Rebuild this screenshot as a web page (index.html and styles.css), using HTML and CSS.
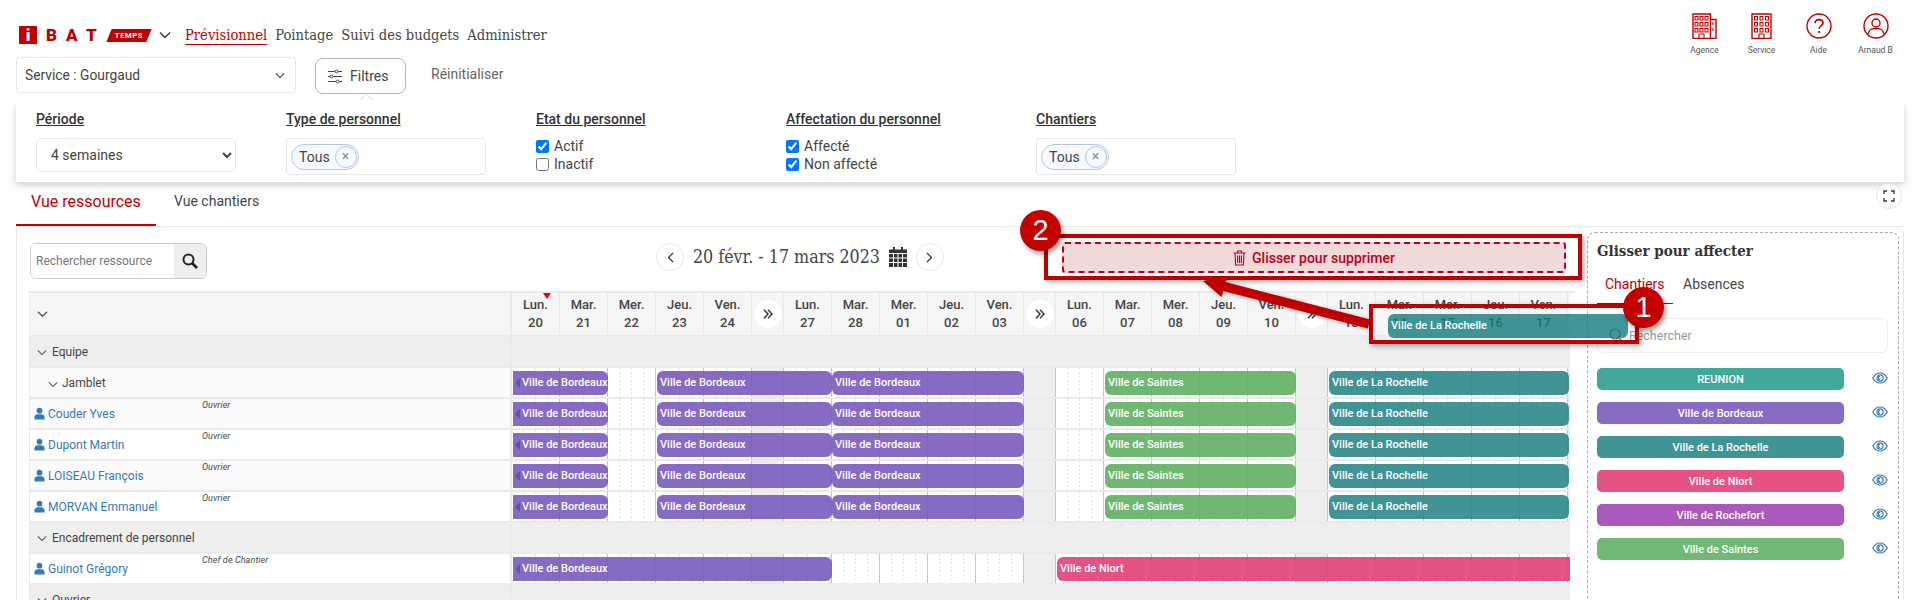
FILE: index.html
```html
<!DOCTYPE html>
<html lang="fr">
<head>
  <meta charset="UTF-8" />
  <title>iBAT Temps | Prévisionnel</title>
  <link rel="stylesheet" href="styles.css">
</head>
<body>

<svg class="icon-defs" width="0" height="0">
  <symbol id="chev" viewBox="0 0 12 8"><path d="M1 1.5 6 6.5 11 1.5" fill="none" stroke="currentColor" stroke-width="1.3"/></symbol>
  <symbol id="user" viewBox="0 0 12 13"><circle cx="6" cy="3.4" r="3.1" fill="currentColor"/><path d="M0.5 13V10.6C0.5 8.4 2.4 7.2 4 7.2H8C9.6 7.2 11.5 8.4 11.5 10.6V13Z" fill="currentColor"/></symbol>
  <symbol id="eye" viewBox="0 0 16 12"><path d="M0.8 6C2.6 2.8 5.2 1 8 1S13.4 2.8 15.2 6C13.4 9.2 10.8 11 8 11S2.6 9.2 0.8 6Z" fill="none" stroke="currentColor" stroke-width="1.2"/><circle cx="8" cy="6" r="3.1" fill="none" stroke="currentColor" stroke-width="1.2"/><path d="M8 4.4A1.6 1.6 0 0 0 8 7.6" fill="none" stroke="currentColor" stroke-width="1.2"/></symbol>
  <symbol id="dbl" viewBox="0 0 10 10"><path d="M1 0.8 5 5 1 9.2M5 0.8 9 5 5 9.2" fill="none" stroke="currentColor" stroke-width="1.4"/></symbol>
</svg>

<header class="topbar">
  <div class="brand-nav">
    <div class="logo">
      <span class="logo-i">i</span>
      <span class="logo-bat">B</span><span class="logo-bat">A</span><span class="logo-bat">T</span>
      <span class="logo-temps"><span>TEMPS</span></span>
    </div>
    <svg class="logo-chev"><use href="#chev"/></svg>
    <nav class="main-nav">
      <a class="active" href="#">Prévisionnel</a>
      <a href="#">Pointage</a>
      <a href="#">Suivi des budgets</a>
      <a href="#">Administrer</a>
    </nav>
  </div>
  <div class="top-actions">
    <div class="top-action">
      <svg width="25" height="26" viewBox="0 0 25 26" fill="none" stroke="#c00000">
        <path d="M1 25.5V1H18.5V25.5ZM18.5 6.5H24V25.5H18.5" stroke-width="1.4"/>
        <path d="M3 3.5h3v3.5h-3zM8 3.5h3v3.5h-3zM13 3.5h3v3.5h-3zM3 9.5h3v3.5h-3zM8 9.5h3v3.5h-3zM13 9.5h3v3.5h-3zM3 15.5h3v3.5h-3zM8 15.5h3v3.5h-3zM13 15.5h3v3.5h-3zM7 25v-4h5v4M21 9v3M21 15v3" stroke-width="1.1"/>
      </svg>
      <span>Agence</span>
    </div>
    <div class="top-action">
      <svg width="21" height="26" viewBox="0 0 21 26" fill="none" stroke="#c00000">
        <path d="M1 25.5V1H20V25.5Z" stroke-width="1.4"/>
        <path d="M3.5 3.5h3v3.5h-3zM9 3.5h3v3.5h-3zM14.5 3.5h3v3.5h-3zM3.5 9.5h3v3.5h-3zM9 9.5h3v3.5h-3zM14.5 9.5h3v3.5h-3zM3.5 15.5h3v3.5h-3zM9 15.5h3v3.5h-3zM14.5 15.5h3v3.5h-3zM8 25v-4h5v4" stroke-width="1.1"/>
      </svg>
      <span>Service</span>
    </div>
    <div class="top-action">
      <svg width="26" height="26" viewBox="0 0 26 26" fill="none" stroke="#c00000" stroke-width="1.4">
        <circle cx="13" cy="13" r="12"/>
        <path d="M9 10.2C9 7.8 10.8 6.6 13 6.6S17 7.9 17 10C17 12.7 13.2 12.8 13.2 16" stroke-width="1.6"/>
        <path d="M13.2 18v2" stroke-width="1.8"/>
      </svg>
      <span>Aide</span>
    </div>
    <div class="top-action">
      <svg width="26" height="26" viewBox="0 0 26 26" fill="none" stroke="#c00000" stroke-width="1.4">
        <circle cx="13" cy="13" r="12"/>
        <circle cx="13" cy="10" r="4"/>
        <path d="M5 21.5C5.6 17.6 8.4 15.8 10.5 15.8H15.5C17.6 15.8 20.4 17.6 21 21.5"/>
      </svg>
      <span>Arnaud B</span>
    </div>
  </div>
</header>

<section class="toolbar">
  <div class="service-select">
    <span>Service : Gourgaud</span>
    <svg><use href="#chev"/></svg>
  </div>
  <button class="filter-btn">
    <svg width="14" height="15" viewBox="0 0 14 15" fill="none" stroke="#444" stroke-width="1">
      <path d="M0 2.5H7M10 2.5H14M0 7.5H2M5 7.5H14M0 12.5H8M11 12.5H14"/>
      <circle cx="8.5" cy="2.5" r="1.5"/><circle cx="3.5" cy="7.5" r="1.5"/><circle cx="9.5" cy="12.5" r="1.5"/>
    </svg>
    Filtres
  </button>
  <a class="reset-link" href="#">Réinitialiser</a>
</section>

<section class="filters">
  <div class="filter-col">
    <h4>Période</h4>
    <select class="period-select"><option>4 semaines</option></select>
  </div>
  <div class="filter-col">
    <h4>Type de personnel</h4>
    <div class="tag-box"><span class="tag">Tous <i>×</i></span></div>
  </div>
  <div class="filter-col">
    <h4>Etat du personnel</h4>
    <div class="checks">
      <label class="check"><input type="checkbox" checked> Actif</label>
      <label class="check"><input type="checkbox"> Inactif</label>
    </div>
  </div>
  <div class="filter-col">
    <h4>Affectation du personnel</h4>
    <div class="checks">
      <label class="check"><input type="checkbox" checked> Affecté</label>
      <label class="check"><input type="checkbox" checked> Non affecté</label>
    </div>
  </div>
  <div class="filter-col">
    <h4>Chantiers</h4>
    <div class="tag-box"><span class="tag">Tous <i>×</i></span></div>
  </div>
</section>

<section class="view-tabs">
  <a class="active" href="#">Vue ressources</a>
  <a href="#">Vue chantiers</a>
  <button class="fullscreen">
    <svg width="12" height="12" viewBox="0 0 12 12" fill="none" stroke="#333" stroke-width="1.3"><path d="M1 4V1H4M8 1H11V4M11 8V11H8M4 11H1V8"/></svg>
  </button>
</section>

<main class="content">
  <div class="planning">
    <div class="planning-tools">
      <div class="res-search">
        <input type="text" placeholder="Rechercher ressource">
        <span>
          <svg width="16" height="16" viewBox="0 0 16 16" fill="none" stroke="#222" stroke-width="2"><circle cx="6.5" cy="6.5" r="5"/><path d="M10 10 15 15" stroke-width="2.6"/></svg>
        </span>
      </div>
      <div class="date-nav">
        <button><svg width="7" height="11" viewBox="0 0 7 11" fill="none" stroke="#333" stroke-width="1.2"><path d="M6 1 1.5 5.5 6 10"/></svg></button>
        <span>20 févr. - 17 mars 2023</span>
        <svg class="cal" width="18" height="20" viewBox="0 0 18 20"><path fill="#333" d="M4 0h2v3H4zM12 0h2v3h-2zM0 2.5h18V6H0zM0 7h18v13H0z"/><path stroke="#fff" d="M0 11H18M0 15.5H18M4.5 7V20M9 7V20M13.5 7V20"/></svg>
        <button><svg width="7" height="11" viewBox="0 0 7 11" fill="none" stroke="#333" stroke-width="1.2"><path d="M1 1 5.5 5.5 1 10"/></svg></button>
      </div>
      <div class="trash-zone">
        <svg width="13" height="16" viewBox="0 0 13 16" fill="none" stroke="#c0001c" stroke-width="1.1"><path d="M0.5 3H12.5M4.5 3V1H8.5V3M2 3 2.6 15H10.4L11 3M4.6 5.5V13M6.5 5.5V13M8.4 5.5V13"/></svg>
        Glisser pour supprimer
      </div>
    </div>

    <div class="grid">
      <div class="row head-row">
        <div class="who"><svg class="chev"><use href="#chev"/></svg></div>
        <div class="days">
          <div class="today"><b>Lun.</b><b>20</b></div><div><b>Mar.</b><b>21</b></div><div><b>Mer.</b><b>22</b></div><div><b>Jeu.</b><b>23</b></div><div><b>Ven.</b><b>24</b></div>
          <div class="skip"><span><svg><use href="#dbl"/></svg></span></div>
          <div><b>Lun.</b><b>27</b></div><div><b>Mar.</b><b>28</b></div><div><b>Mer.</b><b>01</b></div><div><b>Jeu.</b><b>02</b></div><div><b>Ven.</b><b>03</b></div>
          <div class="skip"><span><svg><use href="#dbl"/></svg></span></div>
          <div><b>Lun.</b><b>06</b></div><div><b>Mar.</b><b>07</b></div><div><b>Mer.</b><b>08</b></div><div><b>Jeu.</b><b>09</b></div><div><b>Ven.</b><b>10</b></div>
          <div class="skip"><span><svg><use href="#dbl"/></svg></span></div>
          <div><b>Lun.</b><b>13</b></div><div><b>Mar.</b><b>14</b></div><div><b>Mer.</b><b>15</b></div><div><b>Jeu.</b><b>16</b></div><div><b>Ven.</b><b>17</b></div>
        </div>
      </div>

      <div class="row group-row">
        <div class="who"><svg class="chev"><use href="#chev"/></svg>Equipe</div>
        <div class="timeline"></div>
      </div>

      <div class="row odd">
        <div class="who sub"><svg class="chev"><use href="#chev"/></svg>Jamblet</div>
        <div class="timeline cells">
          <div class="bar purple first s1">Ville de Bordeaux</div>
          <div class="bar purple s2">Ville de Bordeaux</div>
          <div class="bar purple s3">Ville de Bordeaux</div>
          <div class="bar green s4">Ville de Saintes</div>
          <div class="bar teal s5">Ville de La Rochelle</div>
        </div>
      </div>
      <div class="row odd">
        <div class="who"><svg class="user"><use href="#user"/></svg><a href="#">Couder Yves</a><em>Ouvrier</em></div>
        <div class="timeline cells">
          <div class="bar purple first s1">Ville de Bordeaux</div>
          <div class="bar purple s2">Ville de Bordeaux</div>
          <div class="bar purple s3">Ville de Bordeaux</div>
          <div class="bar green s4">Ville de Saintes</div>
          <div class="bar teal s5">Ville de La Rochelle</div>
        </div>
      </div>
      <div class="row">
        <div class="who"><svg class="user"><use href="#user"/></svg><a href="#">Dupont Martin</a><em>Ouvrier</em></div>
        <div class="timeline cells">
          <div class="bar purple first s1">Ville de Bordeaux</div>
          <div class="bar purple s2">Ville de Bordeaux</div>
          <div class="bar purple s3">Ville de Bordeaux</div>
          <div class="bar green s4">Ville de Saintes</div>
          <div class="bar teal s5">Ville de La Rochelle</div>
        </div>
      </div>
      <div class="row odd">
        <div class="who"><svg class="user"><use href="#user"/></svg><a href="#">LOISEAU François</a><em>Ouvrier</em></div>
        <div class="timeline cells">
          <div class="bar purple first s1">Ville de Bordeaux</div>
          <div class="bar purple s2">Ville de Bordeaux</div>
          <div class="bar purple s3">Ville de Bordeaux</div>
          <div class="bar green s4">Ville de Saintes</div>
          <div class="bar teal s5">Ville de La Rochelle</div>
        </div>
      </div>
      <div class="row">
        <div class="who"><svg class="user"><use href="#user"/></svg><a href="#">MORVAN Emmanuel</a><em>Ouvrier</em></div>
        <div class="timeline cells">
          <div class="bar purple first s1">Ville de Bordeaux</div>
          <div class="bar purple s2">Ville de Bordeaux</div>
          <div class="bar purple s3">Ville de Bordeaux</div>
          <div class="bar green s4">Ville de Saintes</div>
          <div class="bar teal s5">Ville de La Rochelle</div>
        </div>
      </div>

      <div class="row group-row">
        <div class="who"><svg class="chev"><use href="#chev"/></svg>Encadrement de personnel</div>
        <div class="timeline"></div>
      </div>
      <div class="row">
        <div class="who"><svg class="user"><use href="#user"/></svg><a href="#">Guinot Grégory</a><em>Chef de Chantier</em></div>
        <div class="timeline cells">
          <div class="bar purple first s6">Ville de Bordeaux</div>
          <div class="bar pink s7">Ville de Niort</div>
        </div>
      </div>
      <div class="row group-row">
        <div class="who"><svg class="chev"><use href="#chev"/></svg>Ouvrier</div>
        <div class="timeline"></div>
      </div>
    </div>
  </div>

  <aside class="side">
    <div class="side-inner">
      <h3>Glisser pour affecter</h3>
      <div class="side-tabs">
        <a class="active" href="#">Chantiers</a>
        <a href="#">Absences</a>
      </div>
      <div class="side-search">
        <svg width="15" height="15" viewBox="0 0 15 15" fill="none" stroke="#555" stroke-width="1.2"><circle cx="6" cy="6" r="5"/><path d="M9.8 9.8 14 14"/></svg>
        <input type="text" placeholder="Rechercher">
      </div>
      <ul class="chips">
        <li><span class="chip reunion">REUNION</span><svg><use href="#eye"/></svg></li>
        <li><span class="chip bordeaux">Ville de Bordeaux</span><svg><use href="#eye"/></svg></li>
        <li><span class="chip rochelle">Ville de La Rochelle</span><svg><use href="#eye"/></svg></li>
        <li><span class="chip niort">Ville de Niort</span><svg><use href="#eye"/></svg></li>
        <li><span class="chip rochefort">Ville de Rochefort</span><svg><use href="#eye"/></svg></li>
        <li><span class="chip saintes">Ville de Saintes</span><svg><use href="#eye"/></svg></li>
      </ul>
    </div>
  </aside>
</main>

<!-- tutorial annotations drawn over the screen -->
<div class="drag-ghost">Ville de La Rochelle</div>
<div class="callout callout-drop"></div>
<div class="callout callout-drag"></div>
<svg class="arrow" width="1920" height="600" viewBox="0 0 1920 600">
  <path fill="#c00000" d="M1203 281 1227.1 275.9 1225.4 282.1 1370.1 319.6 1367.9 328.4 1223.2 290.9 1221.5 297.1Z"/>
</svg>
<div class="badge badge-two">2</div>
<div class="badge badge-one">1</div>

</body>
</html>
```

FILE: styles.css
```css
* {
  box-sizing: border-box;
  margin: 0;
  padding: 0;
}

html, body {
  width: 1920px;
  height: 600px;
  overflow: hidden;
}

body {
  position: relative;
  background: #fff;
  color: #444;
  font-family: Roboto, sans-serif;
  font-size: 13px;
}

a {
  color: inherit;
  text-decoration: none;
}

button {
  font-family: inherit;
  cursor: pointer;
}

.icon-defs {
  position: absolute;
}

/* top bar */
.topbar {
  display: flex;
  justify-content: space-between;
  height: 57px;
  padding: 0 16px 0 19px;
}

.brand-nav {
  display: flex;
  align-items: flex-start;
  padding-top: 26px;
}

.logo {
  display: flex;
  align-items: center;
  height: 18px;
  color: #c00000;
  font-weight: 900;
}

.logo-i {
  width: 18px;
  height: 18px;
  margin-right: 9px;
  background: #c00000;
  color: #fff;
  font-size: 17px;
  line-height: 18px;
  text-align: center;
}

.logo-bat {
  width: 20px;
  font-size: 17px;
  line-height: 18px;
}

.logo-temps {
  width: 40px;
  height: 13px;
  margin-left: 3px;
  background: #c00000;
  color: #fff;
  font-size: 7.5px;
  font-weight: 700;
  letter-spacing: 0.7px;
  line-height: 13px;
  text-align: center;
  transform: skewX(-22deg);
}

.logo-temps span {
  display: block;
  transform: skewX(22deg);
}

.logo-chev {
  width: 12px;
  height: 8px;
  margin: 5px 14px 0 10px;
  color: #333;
}

.main-nav {
  display: flex;
  gap: 8px;
  margin-top: -1px;
  color: #444;
  font-family: "DejaVu Serif Condensed", "DejaVu Serif", serif;
  font-size: 14.6px;
}

.main-nav a {
  height: 20px;
  line-height: 19px;
}

.main-nav a.active {
  border-bottom: 1px solid #c00000;
  color: #c00000;
}

.top-actions {
  display: flex;
  padding-top: 13px;
}

.top-action {
  display: flex;
  flex-direction: column;
  align-items: center;
  width: 57px;
  color: #555;
  font-size: 8.5px;
}

.top-action svg {
  height: 26px;
  margin-bottom: 6px;
}

/* service select and filter button */
.toolbar {
  display: flex;
  align-items: flex-start;
  height: 47px;
  padding-left: 16px;
}

.service-select {
  display: flex;
  align-items: center;
  justify-content: space-between;
  width: 280px;
  height: 36px;
  padding: 0 10px 0 8px;
  border: 1px solid #e6e6e6;
  border-radius: 4px;
  font-size: 13.8px;
}

.service-select svg {
  width: 10px;
  height: 7px;
  color: #333;
}

.filter-btn {
  position: relative;
  display: flex;
  align-items: center;
  gap: 8px;
  width: 91px;
  height: 36px;
  margin: 1px 0 0 19px;
  padding-left: 12px;
  border: 1px solid #b4b4b4;
  border-radius: 8px;
  background: #fff;
  color: #444;
  font-size: 14px;
}

.filter-btn::after {
  content: "";
  position: absolute;
  left: 46px;
  top: 36px;
  width: 8px;
  height: 8px;
  border-left: 1px solid #ddd;
  border-top: 1px solid #ddd;
  transform: rotate(45deg);
}

.reset-link {
  margin: 9px 0 0 25px;
  color: #666;
  font-size: 14px;
}

.filters {
  display: grid;
  grid-template-columns: repeat(5, 250px);
  height: 78px;
  margin: 0 16px;
  padding: 7px 0 0 20px;
  background: #fff;
  box-shadow: 0 3px 8px rgba(0, 0, 0, 0.2);
  clip-path: inset(0 -12px -12px -12px);
}

.filter-col h4 {
  height: 27px;
  color: #333;
  font-size: 14px;
  font-weight: 500;
  line-height: 17px;
  text-decoration: underline;
}

.period-select {
  display: block;
  width: 200px;
  height: 34px;
  padding-left: 10px;
  border: 1px solid #e6e6e6;
  border-radius: 6px;
  background: #fff;
  color: #444;
  font-family: inherit;
  font-size: 14px;
}

.tag-box {
  width: 200px;
  height: 37px;
  padding: 5px 4px;
  border: 1px solid #e6e6e6;
  border-radius: 3px;
}

.tag {
  display: inline-flex;
  align-items: center;
  gap: 5px;
  height: 26px;
  padding: 0 1px 0 7px;
  border: 1px solid #b5c9e6;
  border-radius: 13px;
  background: #f6f9fd;
  font-size: 14px;
}

.tag i {
  width: 22px;
  height: 22px;
  border: 1px solid #b5c9e6;
  border-radius: 50%;
  color: #7f93b8;
  font-style: normal;
  line-height: 19px;
  text-align: center;
}

.checks {
  margin-top: -1px;
}

.check {
  display: flex;
  align-items: center;
  gap: 5px;
  height: 18px;
  font-size: 14px;
}

.check input {
  width: 13px;
  height: 13px;
}

/* view tabs */
.view-tabs {
  position: relative;
  display: flex;
  height: 44px;
  margin-left: 16px;
  margin-right: 16px;
}

.view-tabs a {
  height: 44px;
  padding: 10px 18px 0;
  font-size: 14px;
  line-height: 19px;
}

.view-tabs a.active {
  width: 140px;
  padding-left: 15px;
  padding-right: 0;
  border-bottom: 2px solid #c00000;
  color: #c00000;
  font-size: 16px;
}

.fullscreen {
  position: absolute;
  right: 2px;
  top: 1px;
  display: flex;
  align-items: center;
  justify-content: center;
  width: 26px;
  height: 26px;
  border: 1px solid #e6e6e6;
  border-radius: 50%;
  background: #fff;
}

/* main area */
.content {
  display: flex;
  margin-left: 16px;
  margin-right: 16px;
  border-top: 1px solid #e6e6e6;
  border-left: 1px solid #e6e6e6;
}

.planning {
  width: 1558px;
  flex: none;
  padding-left: 12px;
}

.planning-tools {
  display: flex;
  align-items: flex-start;
  height: 64px;
  padding: 16px 9px 0 1px;
}

.res-search {
  display: flex;
  width: 177px;
  height: 36px;
  border: 1px solid #ccc;
  border-radius: 6px;
  overflow: hidden;
}

.res-search input {
  width: 143px;
  padding-left: 5px;
  border: 0;
  outline: 0;
  font-family: inherit;
  font-size: 12px;
}

.res-search input::placeholder,
.side-search input::placeholder {
  color: #777;
  opacity: 1;
}

.res-search span {
  display: flex;
  align-items: center;
  justify-content: center;
  flex: 1;
  background: #eee;
}

.date-nav {
  display: flex;
  align-items: center;
  height: 28px;
  margin: 0 0 0 449px;
  color: #444;
  font-family: "DejaVu Serif Condensed", "DejaVu Serif", serif;
  font-size: 17.7px;
  white-space: nowrap;
}

.date-nav button {
  display: flex;
  align-items: center;
  justify-content: center;
  width: 28px;
  height: 28px;
  border: 1px solid #e6e6e6;
  border-radius: 50%;
  background: #fff;
}

.date-nav span {
  margin: 0 9px;
}

.date-nav .cal {
  margin-right: 9px;
}

.trash-zone {
  display: flex;
  align-items: center;
  justify-content: center;
  gap: 6px;
  width: 504px;
  height: 31px;
  margin: -1px 0 0 auto;
  border: 2px dashed #b8001f;
  border-radius: 3px;
  background: #f0d9d9;
  color: #c0001c;
  font-weight: 500;
  font-size: 14px;
}

/* planning grid */
.grid {
  border-top: 2px solid #eaeaea;
}

.row {
  display: flex;
  height: 31px;
}

.who {
  position: relative;
  display: flex;
  align-items: center;
  width: 483px;
  flex: none;
  padding-left: 4px;
  border-left: 1px solid #eaeaea;
  border-right: 2px solid #eaeaea;
  border-bottom: 2px solid #eaeaea;
  color: #444;
  font-size: 12px;
}

.who a {
  color: #337ab7;
}

.who em {
  position: absolute;
  left: 172px;
  top: 1px;
  font-size: 9px;
  letter-spacing: 0.1px;
  color: #444;
}

.who .chev {
  width: 10px;
  height: 7px;
  margin: 2px 5px 0 3px;
  color: #555;
}

.who.sub .chev {
  margin: 3px 4px 0 14px;
}

.who .user {
  width: 11px;
  height: 13px;
  margin-right: 3px;
  color: #337ab7;
}

.odd .who {
  background: #fafafa;
}

.head-row {
  height: 44px;
}

.head-row .who {
  background: #f5f5f5;
}

.head-row .who .chev {
  margin: 0 0 0 3px;
  width: 11px;
  height: 8px;
}

.days,
.timeline {
  display: grid;
  grid-template-columns: repeat(5, 48px) 32px repeat(5, 48px) 32px repeat(5, 48px) 32px repeat(5, 48px);
  width: 1058px;
  flex: none;
}

.days {
  background: #f5f5f5;
  border-bottom: 2px solid #eaeaea;
}

.days > div {
  position: relative;
  display: flex;
  flex-direction: column;
  align-items: center;
  justify-content: center;
  border-right: 1px solid #e8e8e8;
  color: #444;
  font-size: 13px;
  line-height: 18px;
}

.days b {
  font-weight: 500;
}

.days .today::before {
  content: "";
  position: absolute;
  left: 31px;
  top: 0;
  border: 4px solid transparent;
  border-top: 6px solid #e8000f;
  border-bottom: 0;
  width: 0;
}

.days .skip span {
  display: flex;
  align-items: center;
  justify-content: center;
  width: 28px;
  height: 28px;
  border-radius: 50%;
  background: #fff;
  color: #333;
}

.days .skip svg {
  width: 10px;
  height: 10px;
}

.group-row .who,
.group-row .timeline {
  background: #eee;
}

.group-row .who {
  color: #444;
}

.group-row .timeline {
  border-bottom: 2px solid #eaeaea;
}

/* one tile is a week plus its folded weekend: 272px */
.cells {
  grid-template-rows: 24px;
  padding-top: 3px;
  border-bottom: 2px solid #eaeaea;
  background-color: #fff;
  background-size: 272px 100%;
  background-image:
    linear-gradient(to right,
      transparent 47px, #c4c4c4 47px, #c4c4c4 48px,
      transparent 48px, transparent 95px, #c4c4c4 95px, #c4c4c4 96px,
      transparent 96px, transparent 143px, #c4c4c4 143px, #c4c4c4 144px,
      transparent 144px, transparent 191px, #c4c4c4 191px, #c4c4c4 192px,
      transparent 192px, transparent 239px, #c4c4c4 239px, #c4c4c4 240px,
      #eee 240px, #eee 271px, #c4c4c4 271px),
    repeating-linear-gradient(to bottom, transparent 0, transparent 2px, #fff 2px, #fff 4px),
    repeating-linear-gradient(to right, transparent 0, transparent 11px, #e2e2e2 11px, #e2e2e2 12px);
}

.bar {
  grid-row: 1;
  overflow: hidden;
  padding-left: 3px;
  border-radius: 6px;
  color: #fff;
  font-size: 11px;
  font-weight: 500;
  line-height: 24px;
  white-space: nowrap;
}

.purple { background: rgba(122, 90, 189, 0.9); }
.teal { background: rgba(44, 136, 138, 0.9); }
.green { background: rgba(96, 176, 99, 0.9); }
.pink { background: rgba(226, 64, 121, 0.9); }

.s1 { grid-column: 1 / 3; }
.s2 { grid-column: 4 / 8; }
.s3 { grid-column: 8 / 12; }
.s4 { grid-column: 14 / 18; }
.s5 { grid-column: 19 / 24; margin-right: -1px; }
.s6 { grid-column: 1 / 8; }
.s7 { grid-column: 13 / 24; margin-right: -2px; }

.s2, .s4, .s5, .s7 { margin-left: 1px; }

.first {
  position: relative;
  margin-left: 1px;
  padding-left: 9px;
  border-radius: 0 6px 6px 0;
}

.first::before {
  content: "";
  position: absolute;
  left: 2px;
  top: 7px;
  border: 5px solid transparent;
  border-right-color: #64558f;
  border-left: 0;
}

.s7 {
  border-radius: 6px 0 0 6px;
}

/* right side panel */
.side {
  flex: 1;
  padding: 5px 4px 0 12px;
  height: 380px;
  border-right: 1px solid #e6e6e6;
  border-radius: 0 8px 0 0;
}

.side-inner {
  height: 375px;
  padding: 10px 10px 0 9px;
  border: 1px dashed #aaa;
  border-radius: 8px;
}

.side-inner h3 {
  height: 33px;
  color: #333;
  font-family: "DejaVu Serif Condensed", "DejaVu Serif", serif;
  font-size: 15px;
  font-weight: 700;
  line-height: 17px;
}

.side-tabs {
  display: flex;
  height: 28px;
}

.side-tabs a {
  padding: 0 10px;
  font-size: 14px;
  line-height: 16px;
}

.side-tabs a.active {
  width: 76px;
  padding-left: 8px;
  border-bottom: 1px solid #c00000;
  color: #c00000;
}

.side-search {
  display: flex;
  align-items: center;
  gap: 5px;
  height: 35px;
  margin-top: 14px;
  padding-left: 11px;
  border: 1px solid #eee;
  border-radius: 6px;
}

.side-search input {
  width: 200px;
  border: 0;
  outline: 0;
  font-family: inherit;
  font-size: 12.5px;
}

.side-search input::placeholder {
  color: #999;
}

.chips {
  display: flex;
  flex-direction: column;
  gap: 12px;
  margin-top: 15px;
  list-style: none;
}

.chips li {
  display: flex;
  align-items: center;
  height: 22px;
}

.chips svg {
  width: 16px;
  height: 12px;
  margin: -2px 0 0 28px;
  color: #337ab7;
}

.chip {
  width: 247px;
  height: 22px;
  border-radius: 5px;
  color: #fff;
  font-size: 11px;
  font-weight: 500;
  line-height: 23px;
  text-align: center;
}

.reunion { background: #41a89a; }
.bordeaux { background: #876bc4; }
.rochelle { background: #419496; }
.niort { background: #e55386; }
.rochefort { background: #a958bc; }
.saintes { background: #70b873; }

/* annotations */
.callout {
  position: absolute;
  border: 4px solid #c00000;
  box-shadow: 2px 2px 5px rgba(0, 0, 0, 0.35);
}

.callout-drop {
  left: 1044px;
  top: 234px;
  width: 538px;
  height: 46px;
}

.callout-drag {
  left: 1369px;
  top: 304px;
  width: 270px;
  height: 40px;
}

.drag-ghost {
  position: absolute;
  left: 1388px;
  top: 314px;
  width: 240px;
  height: 24px;
  padding-left: 3px;
  border-radius: 6px;
  background: rgba(20, 124, 126, 0.8);
  color: #fff;
  font-size: 11px;
  font-weight: 500;
  line-height: 24px;
}

.arrow {
  position: absolute;
  left: 0;
  top: 0;
  filter: drop-shadow(1px 1px 2px rgba(0, 0, 0, 0.3));
  pointer-events: none;
}

.badge {
  position: absolute;
  width: 41px;
  height: 41px;
  border-radius: 50%;
  background: radial-gradient(circle at 50% 40%, #c60000 55%, #a80000 100%);
  box-shadow: 2px 3px 5px rgba(0, 0, 0, 0.4);
  color: #fff;
  font-family: "Liberation Sans", sans-serif;
  font-size: 29px;
  line-height: 41px;
  text-align: center;
}

.badge-two {
  left: 1020px;
  top: 210px;
}

.badge-one {
  left: 1623px;
  top: 287px;
}
```
